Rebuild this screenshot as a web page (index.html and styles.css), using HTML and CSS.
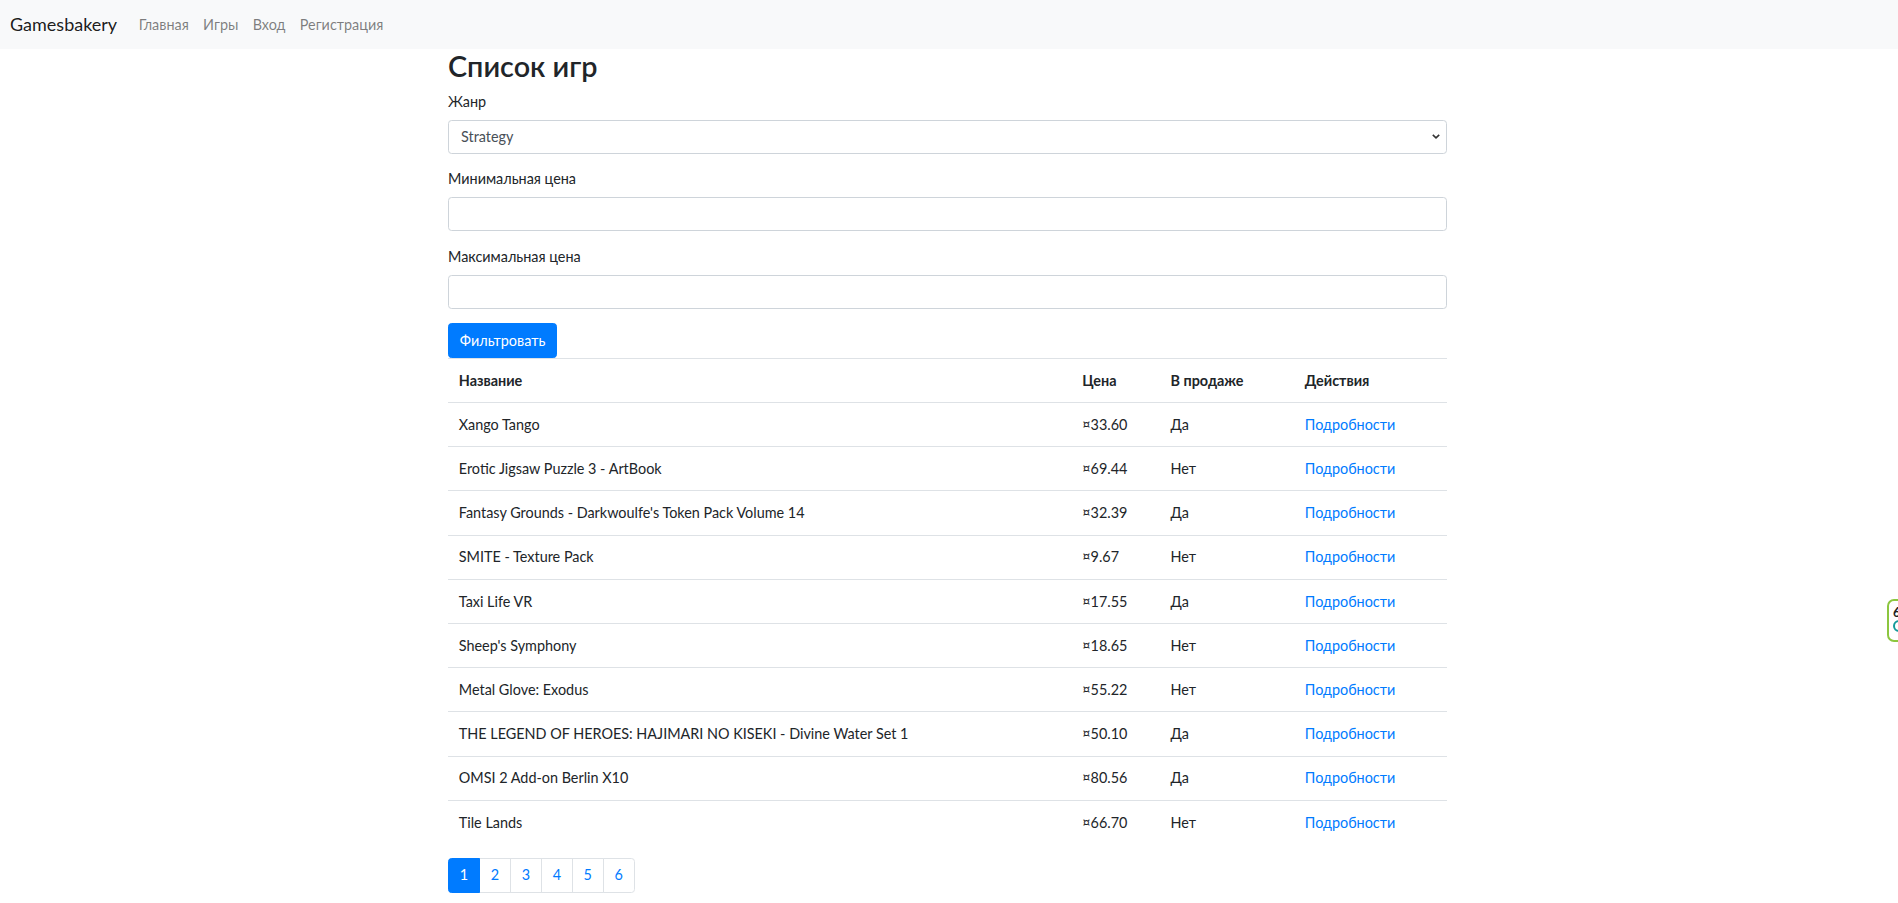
FILE: index.html
```html
<!DOCTYPE html>
<html lang="ru">
<head>
<meta charset="utf-8">
<title>Gamesbakery</title>
<link rel="stylesheet" href="styles.css">
</head>
<body>
<nav class="navbar">
  <a class="brand" href="#">Gamesbakery</a>
  <ul class="nav-links">
    <li><a href="#">Главная</a></li>
    <li><a href="#">Игры</a></li>
    <li><a href="#">Вход</a></li>
    <li><a href="#">Регистрация</a></li>
  </ul>
</nav>
<main class="container">
  <h2 class="title">Список игр</h2>
  <form class="filter">
    <div class="form-group">
      <label for="genre">Жанр</label>
      <select id="genre" class="form-control select"><option>Strategy</option></select>
    </div>
    <div class="form-group">
      <label for="minp">Минимальная цена</label>
      <input id="minp" class="form-control" type="text">
    </div>
    <div class="form-group">
      <label for="maxp">Максимальная цена</label>
      <input id="maxp" class="form-control" type="text">
    </div>
    <button type="button" class="btn">Фильтровать</button>
  </form>
  <table class="games">
    <thead>
      <tr><th class="c-name">Название</th><th class="c-price">Цена</th><th class="c-sale">В продаже</th><th class="c-act">Действия</th></tr>
    </thead>
    <tbody>
      <tr><td>Xango Tango</td><td>¤33.60</td><td>Да</td><td><a href="#">Подробности</a></td></tr>
      <tr><td>Erotic Jigsaw Puzzle 3 - ArtBook</td><td>¤69.44</td><td>Нет</td><td><a href="#">Подробности</a></td></tr>
      <tr><td>Fantasy Grounds - Darkwoulfe's Token Pack Volume 14</td><td>¤32.39</td><td>Да</td><td><a href="#">Подробности</a></td></tr>
      <tr><td>SMITE - Texture Pack</td><td>¤9.67</td><td>Нет</td><td><a href="#">Подробности</a></td></tr>
      <tr><td>Taxi Life VR</td><td>¤17.55</td><td>Да</td><td><a href="#">Подробности</a></td></tr>
      <tr><td>Sheep's Symphony</td><td>¤18.65</td><td>Нет</td><td><a href="#">Подробности</a></td></tr>
      <tr><td>Metal Glove: Exodus</td><td>¤55.22</td><td>Нет</td><td><a href="#">Подробности</a></td></tr>
      <tr><td>THE LEGEND OF HEROES: HAJIMARI NO KISEKI - Divine Water Set 1</td><td>¤50.10</td><td>Да</td><td><a href="#">Подробности</a></td></tr>
      <tr><td>OMSI 2 Add-on Berlin X10</td><td>¤80.56</td><td>Да</td><td><a href="#">Подробности</a></td></tr>
      <tr><td>Tile Lands</td><td>¤66.70</td><td>Нет</td><td><a href="#">Подробности</a></td></tr>
    </tbody>
  </table>
  <ul class="pagination">
    <li class="page active"><a href="#">1</a></li>
    <li class="page"><a href="#">2</a></li>
    <li class="page"><a href="#">3</a></li>
    <li class="page"><a href="#">4</a></li>
    <li class="page"><a href="#">5</a></li>
    <li class="page"><a href="#">6</a></li>
  </ul>
</main>
<div class="side-widget">
  <span class="sw-top">6</span>
  <span class="sw-ring"></span>
</div>
</body>
</html>
```

FILE: styles.css
```css
html, body {
  margin: 0;
  padding: 0;
}
body {
  font-family: Lato, "Noto Sans", "Liberation Sans", sans-serif;
  font-size: 14.4px;
  line-height: 21.6px;
  color: #212529;
  background: #fff;
  overflow: hidden;
}
a {
  text-decoration: none;
  color: #007bff;
}

/* navbar */
.navbar {
  height: 49px;
  background: #f8f9fa;
  display: flex;
  align-items: center;
  padding: 0 10px;
  box-sizing: border-box;
}
.brand {
  font-size: 18px;
  color: rgba(0, 0, 0, 0.9);
  margin-right: 14.4px;
  line-height: 27px;
}
.nav-links {
  list-style: none;
  display: flex;
  margin: 0;
  padding: 0;
}
.nav-links a {
  display: block;
  padding: 0 7.2px;
  color: rgba(0, 0, 0, 0.5);
}

/* container */
.container {
  max-width: 1026px;
  margin: 0 auto;
  padding: 0 15px 0 12px;
  box-sizing: border-box;
}
.title {
  font-size: 28.8px;
  font-weight: 600;
  line-height: 34.56px;
  margin: 0 0 7.2px;
}

/* form */
.filter {
  margin: 0;
}
.form-group {
  margin-bottom: 14.4px;
}
.form-group label {
  display: block;
  margin-bottom: 7.2px;
}
.form-control {
  display: block;
  width: 100%;
  height: 34.4px;
  box-sizing: border-box;
  padding: 5.4px 10.8px;
  font-family: inherit;
  font-size: 14.4px;
  line-height: 21.6px;
  color: #495057;
  background: #fff;
  border: 1px solid #ced4da;
  border-radius: 3.6px;
  margin: 0;
}
.select {
  appearance: none;
  -webkit-appearance: none;
  padding-left: 12px;
  background-image: url("data:image/svg+xml,%3Csvg xmlns='http://www.w3.org/2000/svg' width='8' height='5' viewBox='0 0 8 5'%3E%3Cpath d='M0.8 0.8 L4 3.8 L7.2 0.8' fill='none' stroke='%23333' stroke-width='1.6'/%3E%3C/svg%3E");
  background-repeat: no-repeat;
  background-position: right 6px center;
  background-size: 8px 5px;
}
.btn {
  display: block;
  font-family: inherit;
  font-size: 14.4px;
  line-height: 21.6px;
  padding: 5.4px 10.8px;
  color: #fff;
  background: #007bff;
  border: 1px solid #007bff;
  border-radius: 3.6px;
  height: 34.4px;
  box-sizing: border-box;
  cursor: pointer;
}

/* table */
.games {
  width: 100%;
  border-collapse: collapse;
  margin-bottom: 14.4px;
  table-layout: fixed;
}
.games th,
.games td {
  box-sizing: border-box;
  padding: 10.8px;
  border-top: 1px solid #dee2e6;
  text-align: left;
  vertical-align: top;
  line-height: 21.6px;
  white-space: nowrap;
}
.games th {
  font-weight: 700;
}
.c-price { width: 88.3px; }
.c-sale { width: 134.3px; }
.c-act { width: 153px; }

/* pagination */
.pagination {
  list-style: none;
  display: flex;
  margin: 0;
  padding: 0;
}
.page a {
  display: block;
  padding: 7.2px 10.8px;
  line-height: 18px;
  border: 1px solid #dee2e6;
  margin-left: -1px;
  color: #007bff;
  background: #fff;
}
.page:first-child a {
  margin-left: 0;
  border-radius: 3.6px 0 0 3.6px;
}
.page:last-child a {
  border-radius: 0 3.6px 3.6px 0;
}
.page.active a {
  background: #007bff;
  border-color: #007bff;
  color: #fff;
  position: relative;
  z-index: 1;
}

/* side widget (clipped at right edge) */
.side-widget {
  position: fixed;
  left: 1887px;
  top: 599px;
  width: 30px;
  height: 43px;
  box-sizing: border-box;
  border: 2px solid #8cc63f;
  border-radius: 7px;
  background: #fff;
  padding: 4px 0 0 4px;
  display: flex;
  flex-direction: column;
  gap: 1px;
}
.sw-top {
  font-weight: 700;
  font-size: 13px;
  line-height: 14px;
  color: #222;
}
.sw-ring {
  width: 12px;
  height: 12px;
  border: 2px solid #139a9a;
  border-radius: 50%;
  box-sizing: border-box;
}
```
